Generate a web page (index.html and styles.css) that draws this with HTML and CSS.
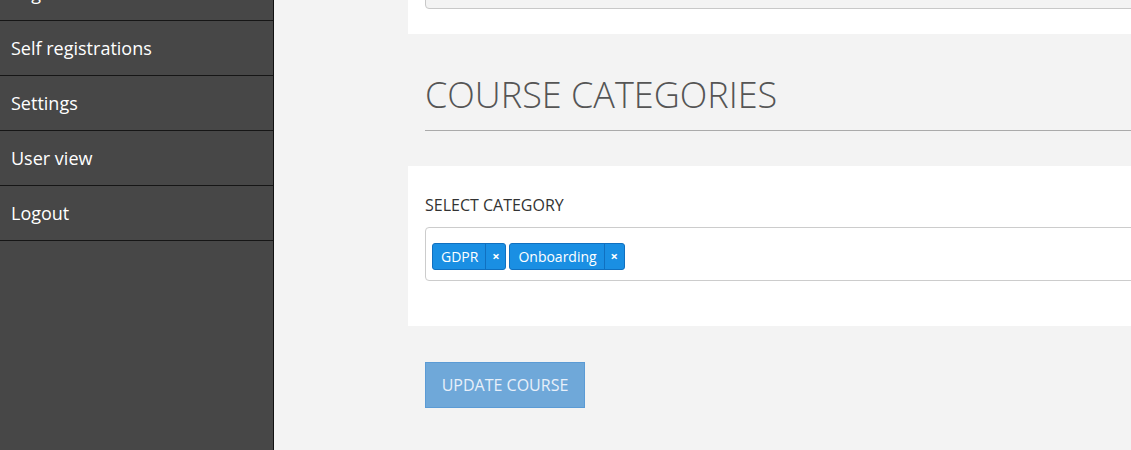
FILE: index.html
```html
<!DOCTYPE html>
<html lang="en">
<head>
  <meta charset="UTF-8">
  <title>Edit course</title>
  <link rel="stylesheet" href="styles.css">
</head>
<body>
<div class="layout">
  <nav class="sidebar">
    <a class="nav-item" href="#">Logs</a>
    <a class="nav-item" href="#">Self registrations</a>
    <a class="nav-item" href="#">Settings</a>
    <a class="nav-item" href="#">User view</a>
    <a class="nav-item" href="#">Logout</a>
  </nav>

  <main class="content">
    <section class="panel panel-top">
      <input class="field" type="text" disabled>
    </section>

    <div class="section-head">
      <h1>Course categories</h1>
    </div>

    <section class="panel panel-cat">
      <label class="label">Select category</label>
      <div class="tagbox">
        <span class="tag"><span class="tag-text">GDPR</span><span class="tag-x">&#215;</span></span>
        <span class="tag"><span class="tag-text">Onboarding</span><span class="tag-x">&#215;</span></span>
      </div>
    </section>

    <div class="actions">
      <button class="btn" type="button">Update course</button>
    </div>
  </main>
</div>
</body>
</html>
```

FILE: styles.css
```css
:root {
  --sidebar: #474747;
  --page: #f3f3f3;
  --tag: #1a8fe3;
  --tag-border: #1070c0;
  --sans: 'Open Sans', 'Noto Sans', 'Liberation Sans', sans-serif;
}
html, body {
  margin: 0;
  padding: 0;
  height: 100%;
  overflow: hidden;
  background: var(--page);
  font-family: var(--sans);
}
.layout {
  display: flex;
  min-height: 100%;
}
.sidebar {
  width: 273px;
  flex: none;
  background: var(--sidebar);
  border-right: 1px solid #111;
  display: flex;
  flex-direction: column;
  margin-top: -34px;
  min-height: 520px;
}
.nav-item {
  display: block;
  height: 54px;
  line-height: 54px;
  padding-left: 11px;
  border-bottom: 1px solid #161616;
  color: #fff;
  font-size: 18px;
  text-decoration: none;
}
.content {
  flex: 1;
  padding-left: 134px;
  margin-top: -60px;
  margin-right: -40px;
}
.panel {
  background: #fff;
  padding: 0 17px;
}
.panel-top {
  padding-top: 20px;
  padding-bottom: 25px;
}
.field {
  display: block;
  box-sizing: border-box;
  width: 100%;
  height: 49px;
  margin: 0;
  border: 1px solid #c8c8c8;
  border-radius: 4px;
  background: #f3f3f3;
}
.section-head {
  padding: 37px 0 35px 17px;
}
.section-head h1 {
  margin: 0;
  font-size: 36px;
  font-weight: 300;
  line-height: 48px;
  color: #555;
  text-transform: uppercase;
  border-bottom: 1px solid #aaa;
  padding-bottom: 11px;
}
.panel-cat {
  padding-top: 29px;
  padding-bottom: 45px;
}
.label {
  display: block;
  font-size: 16px;
  color: #333;
  text-transform: uppercase;
  line-height: 20px;
  margin-bottom: 12px;
}
.tagbox {
  box-sizing: border-box;
  height: 54px;
  border: 1px solid #ccc;
  border-radius: 4px;
  display: flex;
  align-items: flex-start;
  gap: 3px;
  padding: 15px 6px 0;
}
.tag {
  display: flex;
  align-items: stretch;
  height: 27px;
  box-sizing: border-box;
  background: var(--tag);
  border: 1px solid var(--tag-border);
  border-radius: 3px;
  color: #fff;
  font-size: 14px;
  line-height: 25px;
}
.tag-text {
  padding: 0 7px 0 8px;
}
.tag-x {
  width: 19px;
  text-align: center;
  border-left: 1px solid var(--tag-border);
  font-weight: 700;
  font-size: 13px;
}
.actions {
  padding: 36px 0 0 17px;
}
.btn {
  width: 160px;
  height: 46px;
  background: #6fa8d9;
  border: 1px solid #5b9bd5;
  border-radius: 0;
  color: #e8f0fa;
  font-family: var(--sans);
  font-size: 16px;
  text-transform: uppercase;
  padding: 0;
}
```
